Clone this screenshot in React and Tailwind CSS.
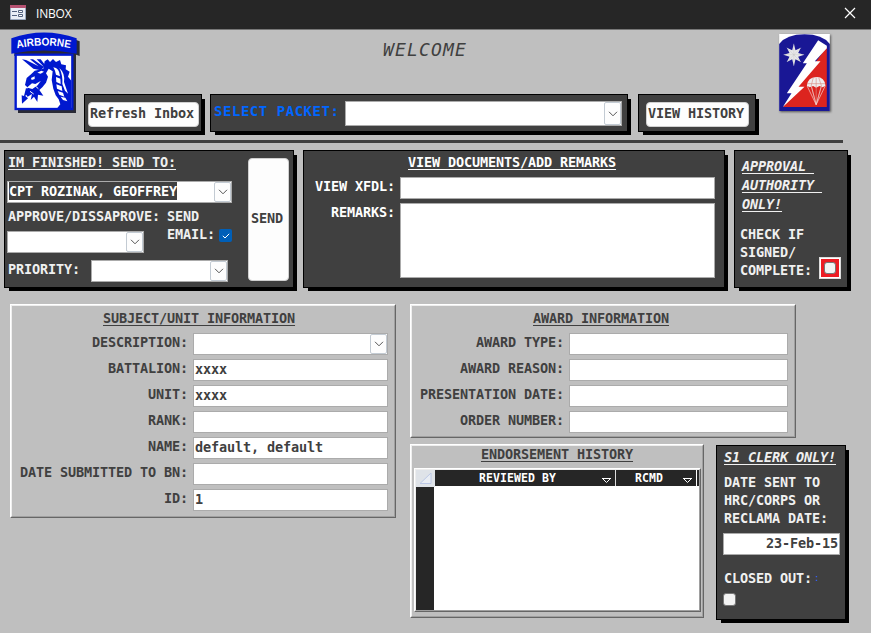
import React from "react";

const Chevron = () => (
  <svg width="10" height="6" viewBox="0 0 10 6" fill="none" stroke="#555" strokeWidth="1">
    <path d="M1 .8 5 4.8 9 .8" />
  </svg>
);

function Panel({ className, children }) {
  return (
    <section className={`shrink-0 border border-black bg-[#404040] text-[#f0f0f0] shadow-[4px_4px_0_-1px_#000] ${className}`}>
      {children}
    </section>
  );
}

function Raised({ className, children }) {
  return (
    <section className={`shrink-0 border border-t-white border-l-white border-r-[#666] border-b-[#666] ${className}`}>
      <div className="h-full border border-t-[#eee] border-l-[#eee] border-r-[#a0a0a0] border-b-[#a0a0a0]">{children}</div>
    </section>
  );
}

function Field({ className = "", combo = false, children }) {
  return (
    <div className={`flex shrink-0 border border-[#ababab] bg-white text-[#404040] ${className}`}>
      <div className="min-w-0 flex-1 px-px leading-[18px]">{children}</div>
      {combo && (
        <div className="flex w-[17px] items-center justify-center rounded-[2px] border border-[#c3cbd3] bg-[#fdfdfd]">
          <Chevron />
        </div>
      )}
    </div>
  );
}

function Row({ label, labelClass, fieldClass, combo, value }) {
  return (
    <div className="flex h-[22px]">
      <div className={`text-right leading-[18px] ${labelClass}`}>{label}</div>
      <Field className={fieldClass} combo={combo}>{value}</Field>
    </div>
  );
}

const Heading = ({ className = "", children }) => (
  <h2 className={`underline decoration-1 underline-offset-2 [text-decoration-skip-ink:none] ${className}`}>{children}</h2>
);

function AirborneBadge() {
  return (
    <svg className="ml-[10px] shrink-0" width="70" height="84" viewBox="30 90 210 252">
      <path d="M43 124Q140 82 239 124V168L228 164V339H54V168L43 168Z" fill="#292a35" />
      <path d="M34 115Q132 80 230 115V161Q132 142 34 161Z" fill="#0018cf" />
      <rect x="47" y="164" width="170" height="163" fill="#fff" stroke="#0018cf" strokeWidth="7" />
      <path id="tab-arc" d="M51 145Q132 128 214 145" fill="none" />
      <text fontSize="33" fontWeight="700" fill="#fff" letterSpacing="0" fontFamily="Liberation Sans, sans-serif">
        <textPath href="#tab-arc" textLength="161" lengthAdjust="spacingAndGlyphs">AIRBORNE</textPath>
      </text>
      <g fill="#0018cf">
        <path d="M130 206 134 184 143 178 150 186 159 177 168 186 180 180 184 193 198 196 197 208 209 215 204 230 214 242V324H172L181 313 176 298 167 286 160 266 155 240 158 214 146 206 138 220 144 230 138 248 127 262 118 270 130 287 114 284 112 306 102 290 92 300 96 282 83 290 75 280 83 263 97 267 113 256 122 243 106 252 96 250 82 262 75 255 80 234 94 222 104 212Z" />
        <path d="M66 178 78 180 128 205 122 211 100 206 76 186ZM90 178H99L132 201 126 207ZM110 178H122L136 196 132 201Z" />
        <path d="M78 264 88 270 76 288 84 295 66 311 65 286 72 288Z" />
      </g>
      <g fill="#fff">
        <path d="M93 234 104 229 104 237 95 240ZM112 218 124 212 132 215 122 221Z" />
        <path d="M160 202Q178 203 180 229L168 224 165 212ZM168 231 181 236 182 252 169 246ZM169 253 185 259 187 273 171 266ZM173 273 189 278 193 290 178 284ZM182 290 196 293 202 304 189 300Z" />
        <path d="M178 204Q196 220 192 246L204 281 195 272 187 252Q189 226 178 204Z" />
      </g>
      <path d="M106 258 115 266M90 274 101 282" stroke="#fff" strokeWidth="3" />
    </svg>
  );
}

function BrigadePatch() {
  return (
    <svg className="mt-[4px] ml-[23px] shrink-0 drop-shadow-[1px_1px_1px_#555]" width="51" height="77" viewBox="598 102 152 231">
      <path fill="#fff" d="M598 102H750V333H598Z" />
      <path fill="#191795" d="M598 132Q620 103 674 103T750 132V333H598Z" />
      <path fill="#dc241f" d="M741 140V321H610Z" />
      <path fill="#fff" d="M715 121 741 137V145L705 184H722L656 260H674L609 321 635 280H621L681 190H669Z" />
      <path fill="#e8e9e9" d="M642 131 647 151 663 143 655 159 673 164 655 170 663 186 647 178 642 198 637 178 621 186 629 170 611 164 629 159 621 143 637 151Z" />
      <path d="M642 131V198M611 164H673M621 143 663 186M663 143 621 186" stroke="#bbb" strokeWidth="1" />
      <path fill="#eee" d="M681 257Q684 232 709 231T737 257L728 262 719 258 709 263 700 258 690 262Z" />
      <path d="M683 251H736M709 232V314M700 234 694 258 709 314 725 258 717 234" fill="none" stroke="#dd8f88" strokeWidth="2" />
      <path d="M682 258 709 314 736 258M695 260 709 314 724 260" fill="none" stroke="#f5d6d3" strokeWidth="2" />
    </svg>
  );
}

const SortMark = () => (
  <svg width="9" height="6" viewBox="0 0 9 6" fill="none" stroke="#fff">
    <path d="M0 .5H9M1 1 4.5 4.5 8 1" />
  </svg>
);

export default function App() {
  return (
    <div className="flex h-[633px] w-[871px] flex-col overflow-hidden bg-[#bfbfbf] font-['DejaVu_Sans_Mono',monospace] text-[13.5px] leading-[18px] font-bold tracking-[-0.127px] whitespace-pre text-[#404040]">
      <header className="flex h-[30px] shrink-0 items-center border-b border-[#777] bg-[#262626] pr-[15px] pb-[3px] pl-[10px]">
        <svg className="-mt-px" width="16" height="15" viewBox="0 0 16 15">
          <path fill="#e9eef7" stroke="#9ba9bf" d="M.5.5h15v14H.5z" />
          <path fill="#b65272" d="M0 0h16v3H0z" />
          <path d="M2 6.5h5M2 10.5h5" stroke="#53627f" />
          <path d="M8.5 5.5h4v2h-4zM8.5 9.5h4v2h-4z" fill="#fff" stroke="#53627f" />
        </svg>
        <span className="mt-px ml-[10px] font-['Open_Sans',sans-serif] text-[12px] font-normal tracking-[-0.2px] text-white">INBOX</span>
        <svg className="ml-auto" width="12" height="12" viewBox="0 0 12 12" stroke="#fff" strokeWidth="1.2">
          <path d="m1 1 10 10M11 1 1 11" />
        </svg>
      </header>

      <div className="flex h-[110px] shrink-0">
        <AirborneBadge />
        <div className="ml-[4px] w-[672px] shrink-0">
          <h1 className="h-[64px] pt-[7px] pl-[299px] text-[18px] leading-[26px] font-normal tracking-[1.16px] italic">WELCOME</h1>
          <div className="flex">
            <Panel className="h-[38px] w-[118px] pt-[7px] pl-[3px]">
              <button className="h-[25px] w-[111px] rounded-[4px] border border-[#d0d0d0] bg-[#fdfdfd] pr-[3px] pb-[4px] text-[#404040]">Refresh Inbox</button>
            </Panel>
            <Panel className="ml-[8px] flex h-[38px] w-[418px] pt-[6px] pl-[3px]">
              <span className="w-[131px] pt-px text-[14px] leading-[18px] tracking-[0.53px] text-[#0066ff]">SELECT PACKET:</span>
              <Field className="h-[25px] w-[277px]" combo />
            </Panel>
            <Panel className="ml-[10px] h-[38px] w-[118px] pt-[7px] pl-[7px]">
              <button className="h-[25px] w-[103px] rounded-[4px] border border-[#d0d0d0] bg-[#fdfdfd] pr-[3px] pb-[4px] text-[#404040]">VIEW HISTORY</button>
            </Panel>
          </div>
        </div>
        <BrigadePatch />
      </div>
      <div className="h-[3px] w-[843px] shrink-0 bg-[#404040]" />

      <div className="mt-[7px] flex h-[154px] shrink-0 pl-[4px]">
        <Panel className="flex h-[138px] w-[290px] pl-[2px]">
          <div className="w-[241px]">
            <Heading className="ml-px h-[30px] pt-[2px]">IM FINISHED! SEND TO:</Heading>
            <Field className="h-[22px] w-[225px]" combo>
              <span className="inline-block h-[18px] w-[168px] bg-[#404040] align-top leading-[18px] text-white">CPT ROZINAK, GEOFFREY</span>
            </Field>
            <div className="flex h-[57px]">
              <div className="w-[160px] pt-[4px]">
                <div className="ml-px h-[24px]">APPROVE/DISSAPROVE:</div>
                <Field className="h-[22px] w-[137px]" combo />
              </div>
              <div className="pt-[4px]">
                SEND{"\n"}EMAIL:
              </div>
              <div className="mt-[26px] ml-[4px] flex h-[13px] w-[13px] items-center justify-center rounded-[2px] bg-[#005fb8]">
                <svg width="8" height="6" viewBox="0 0 8 6" fill="none" stroke="#fff"><path d="M.8 2.8 3 5 7.2.8" /></svg>
              </div>
            </div>
            <div className="flex">
              <span className="ml-px w-[83px]">PRIORITY:</span>
              <Field className="h-[22px] w-[137px]" combo />
            </div>
          </div>
          <button className="mt-[7px] h-[123px] w-[41px] rounded-[4px] border border-[#d0d0d0] bg-[#fdfdfd] pr-[3px] pb-[3px] text-[#404040]">SEND</button>
        </Panel>

        <Panel className="ml-[9px] h-[138px] w-[422px] text-white">
          <Heading className="ml-[104px] h-[26px] pt-[2px]">VIEW DOCUMENTS/ADD REMARKS</Heading>
          <Row label="VIEW XFDL:" labelClass="w-[91px] mr-[5px]" fieldClass="h-[22px] w-[315px]" />
          <div className="mt-[4px] flex">
            <span className="mr-[5px] w-[91px] text-right">REMARKS:</span>
            <Field className="h-[75px] w-[315px]" />
          </div>
        </Panel>

        <Panel className="ml-[9px] h-[138px] w-[114px] pt-[6px] pl-[5px]">
          <Heading className="ml-[2px] h-[68px] leading-[19px] italic">{"APPROVAL \nAUTHORITY \nONLY!"}</Heading>
          <div className="flex items-end">
            <div className="h-[54px] w-[79px] leading-[18px]">{"CHECK IF\nSIGNED/\nCOMPLETE:"}</div>
            <div className="h-[22px] w-[22px] border border-[#ddd] bg-[#ed1c24] p-[4px] shadow-[inset_0_0_0_1px_#fff]">
              <div className="h-[12px] w-[12px] rounded-[3px] border border-[#777] bg-[#f3f3f3]" />
            </div>
          </div>
        </Panel>
      </div>

      <div className="flex shrink-0 pl-[10px]">
        <Raised className="h-[214px] w-[386px]">
          <Heading className="ml-[91px] h-[27px] pt-[3px]">SUBJECT/UNIT INFORMATION</Heading>
          <div className="flex flex-col gap-[4px]">
            {[["DESCRIPTION:", ""], ["BATTALION:", "xxxx"], ["UNIT:", "xxxx"], ["RANK:", ""], ["NAME:", "default, default"], ["DATE SUBMITTED TO BN:", ""], ["ID:", "1"]].map(([label, value], i) => (
              <Row key={label} label={label} value={value} combo={i === 0} labelClass="w-[176px] mr-[5px]" fieldClass="w-[195px]" />
            ))}
          </div>
        </Raised>

        <div className="ml-[14px] w-[437px]">
          <Raised className="h-[134px] w-[386px]">
            <Heading className="ml-[121px] h-[27px] pt-[3px]">AWARD INFORMATION</Heading>
            <div className="flex flex-col gap-[4px]">
              {["AWARD TYPE:", "AWARD REASON:", "PRESENTATION DATE:", "ORDER NUMBER:"].map((label) => (
                <Row key={label} label={label} labelClass="w-[152px] mr-[5px]" fieldClass="w-[219px]" />
              ))}
            </div>
          </Raised>

          <div className="mt-[6px] flex">
            <Raised className="h-[174px] w-[294px]">
              <Heading className="ml-[69px] h-[22px] leading-[16px]">ENDORSEMENT HISTORY</Heading>
              <Raised className="ml-[2px] h-[144px] w-[287px]">
                <div className="flex h-full bg-white">
                  <div className="w-[18px] bg-[#262626]">
                    <svg className="bg-[#dfe3e8]" width="19" height="17" viewBox="0 0 19 17">
                      <path d="M4 13.5 15 3v10.5z" fill="#e9edf3" stroke="#bcc8e6" />
                    </svg>
                  </div>
                  <div className="ml-px flex h-[16px] flex-1 bg-[#262626] text-[11.5px] leading-[16px] tracking-[0.077px] text-white">
                    <div className="flex w-[181px] border-r border-[#ddd] pl-[44px]">
                      <span className="w-[123px]">REVIEWED BY</span>
                      <div className="self-end pb-[2px]"><SortMark /></div>
                    </div>
                    <div className="flex w-[81px] border-r border-white pl-[19px]">
                      <span className="w-[48px]">RCMD</span>
                      <div className="self-end pb-[2px]"><SortMark /></div>
                    </div>
                  </div>
                </div>
              </Raised>
            </Raised>

            <Panel className="mt-px ml-[12px] h-[175px] w-[130px] pt-[2px] pl-[6px]">
              <Heading className="ml-px h-[25px] italic">S1 CLERK ONLY!</Heading>
              <div className="ml-px h-[60px]">{"DATE SENT TO\nHRC/CORPS OR\nRECLAMA DATE:"}</div>
              <Field className="h-[22px] w-[117px] text-right">23-Feb-15</Field>
              <div className="mt-[14px] ml-px flex h-[24px]">
                CLOSED OUT:<span className="ml-[2px] text-[9px] font-normal text-[#3366ff]">:</span>
              </div>
              <div className="h-[13px] w-[13px] rounded-[3px] border border-[#777] bg-[#f3f3f3]" />
            </Panel>
          </div>
        </div>
      </div>
    </div>
  );
}
